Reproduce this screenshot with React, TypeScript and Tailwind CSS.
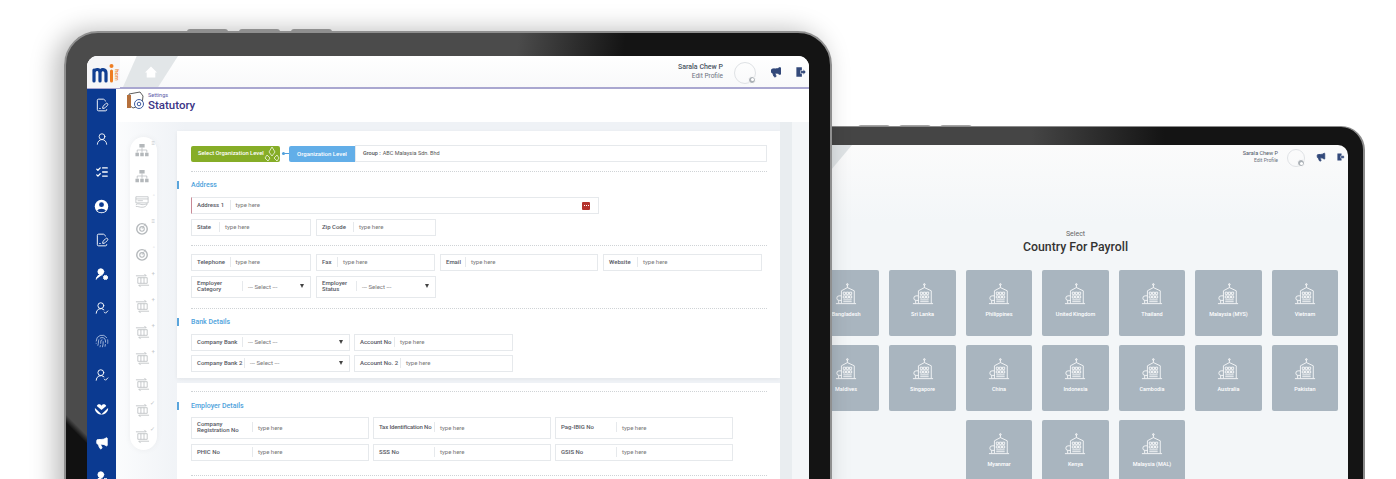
import React from 'react';
import { FilePenLine, ListChecks, Fingerprint, Megaphone, UserRound, UserRoundCheck, UserRoundCog } from 'lucide-react';

const countries = ['Bangladesh', 'Sri Lanka', 'Philippines', 'United Kingdom', 'Thailand', 'Malaysia (MYS)', 'Vietnam', 'Maldives', 'Singapore', 'China', 'Indonesia', 'Cambodia', 'Australia', 'Pakistan', 'Myanmar', 'Kenya', 'Malaysia (MAL)'];

const Building = () => (
  <svg viewBox="0 0 24 24" className="w-[22px] h-[22px]" fill="none" stroke="white" strokeWidth="0.9">
    <path d="M7 22V8.5L13.5 5 21 8.5V22M7 14H4.5a2.5 2.5 0 0 0 0 5H7M4 19v3M1 22.5h22M13.5 5V1.5" />
    <circle cx="13.5" cy="1.6" r="0.9" />
    <path d="M9 10h2.4v2.4H9zM12.4 10h2.4v2.4h-2.4zM15.8 10h2.4v2.4h-2.4zM9 14h2.4v2.4H9zM12.4 14h2.4v2.4h-2.4zM15.8 14h2.4v2.4h-2.4zM9 18.4h9.2M9 20.4h9.2" />
  </svg>
);

const Logo = () => (
  <div className="relative w-[33px] h-[32px] bg-[#f6f6f8] shrink-0 flex items-center pl-[5px]">
    <svg viewBox="0 0 22 20" className="w-[22px] h-[20px] mt-[1px]" fill="none" strokeLinecap="round">
      <path d="M2 18V7M2 9c1-3 6-4 6 1v8M8 10c0-5 6-4 6 0v8" stroke="#123f92" strokeWidth="3.2" />
      <path d="M19.5 8v10" stroke="#ee7d22" strokeWidth="3" />
      <circle cx="19.5" cy="3" r="2" fill="#ee7d22" />
    </svg>
    <span className="absolute right-[-3px] top-[16px] rotate-90 text-[6px] leading-[6px] font-medium text-[#ee7d22]">hcm</span>
  </div>
);

const Door = () => (
  <svg viewBox="0 0 16 16" className="w-[11px] h-[12px]">
    <path d="M2 1h8v14H2z" fill="#33497a" />
    <path d="M8 6h4V3.5L16 8l-4 4.5V10H8z" fill="#33497a" stroke="white" strokeWidth="0.8" />
  </svg>
);

const Avatar = ({ cls }: { cls: string }) => (
  <div className={`relative rounded-full border border-[#dfe2e5] ${cls}`}>
    <div className="absolute right-[-1px] bottom-[-1px] w-[8px] h-[8px] rounded-full bg-[#aab0b5] border border-white flex items-center justify-center">
      <div className="w-[3px] h-[3px] rounded-full bg-white" />
    </div>
  </div>
);

// blue rail glyphs that lucide has no solid version of
const UserDisc = () => (
  <svg viewBox="0 0 16 16" className="w-[15px] h-[15px] shrink-0">
    <circle cx="8" cy="8" r="7.2" fill="white" />
    <circle cx="8" cy="6" r="2.6" fill="#0b3a91" />
    <path d="M3.4 12.6c1-3 8.2-3 9.2 0-2.4 2.2-6.8 2.2-9.2 0z" fill="#0b3a91" />
  </svg>
);

const HeartHand = () => (
  <svg viewBox="0 0 16 16" className="w-[15px] h-[15px] shrink-0">
    <path d="M8 5C6.6 2.6 3.6 3 3 5.4L8 9.6l5-4.2C12.400 3 9.400 2.600 8 5z" fill="white" />
    <path d="M1 7.500l7 6.500 7-6.500c.6 3-2.500 7-7 7s-7.600-4-7-7z" fill="white" />
  </svg>
);

const railIcons = [
  <FilePenLine key="a" size={14} strokeWidth={1.6} className="text-white shrink-0" />,
  <UserRound key="b" size={14} strokeWidth={1.5} className="text-white shrink-0" />,
  <ListChecks key="c" size={14} strokeWidth={2.2} className="text-white shrink-0" />,
  <UserDisc key="d" />,
  <FilePenLine key="e" size={14} strokeWidth={1.6} className="text-white shrink-0" />,
  <UserRoundCog key="f" size={14} strokeWidth={1.5} className="text-white fill-white shrink-0" />,
  <UserRoundCheck key="g" size={14} strokeWidth={1.6} className="text-white shrink-0" />,
  <Fingerprint key="h" size={14} strokeWidth={1.3} className="text-[#c9d6ee] shrink-0" />,
  <UserRoundCheck key="i" size={14} strokeWidth={1.6} className="text-white shrink-0" />,
  <HeartHand key="j" />,
  <Megaphone key="k" size={14} strokeWidth={1.4} className="text-white fill-white shrink-0" />,
  <UserRoundCog key="l" size={14} strokeWidth={1.5} className="text-white fill-white shrink-0" />,
];

const grey = '#b4b8bb';

const Org = () => (
  <svg viewBox="0 0 16 16" className="w-[14px] h-[14px]" fill={grey}>
    <path d="M5 1h6v4H5zM0.500 11h4v4h-4zM6 11h4v4H6zM11.500 11h4v4h-4z" />
    <path d="M8 5v6M2.500 11V8h11v3" fill="none" stroke={grey} strokeWidth="0.8" />
  </svg>
);

const Card = () => (
  <svg viewBox="0 0 16 16" className="w-[16px] h-[14px]" fill="none" stroke={grey} strokeWidth="0.8">
    <path d="M1 2h14v7H1zM1 4.500h14M3 6.500h6" />
    <path d="M1 11c3-2 5 0 7 0s3 0 6-1c-1 3-3 4-6 4s-4-1-7-1" />
  </svg>
);

const Dart = () => (
  <svg viewBox="0 0 16 16" className="w-[14px] h-[14px]" fill="none" stroke={grey}>
    <circle cx="8" cy="9" r="6" strokeWidth="1.6" />
    <circle cx="8" cy="9" r="2.600" strokeWidth="1.2" />
    <path d="M8 9l4-6" strokeWidth="0.8" />
  </svg>
);

const Swap = () => (
  <svg viewBox="0 0 16 16" className="w-[15px] h-[15px]" fill="none" stroke={grey} strokeWidth="0.8">
    <path d="M3 5h10v6H3zM6.300 5v6M9.600 5v6" />
    <path d="M1 3h11l-2-2M15 13H4l2 2" />
  </svg>
);

const navIcons = [
  { icon: Org, extra: '≡' },
  { icon: Org, extra: '' },
  { icon: Card, extra: '◦' },
  { icon: Dart, extra: '≡' },
  { icon: Dart, extra: '◦' },
  { icon: Swap, extra: '+' },
  { icon: Swap, extra: '+' },
  { icon: Swap, extra: '+' },
  { icon: Swap, extra: '+' },
  { icon: Swap, extra: '' },
  { icon: Swap, extra: '✓' },
  { icon: Swap, extra: '✓' },
];

const Field = ({ label, cls, labelCls, select, accent }: { label: string; cls: string; labelCls: string; select?: boolean; accent?: boolean }) => (
  <div className={`flex items-center pb-[2px] border border-[#e6e9ec] bg-white ${accent ? 'border-l-[#c98a96]' : ''} ${cls}`}>
    <span className={`pl-[5px] text-[6px] leading-[6px] font-medium text-[#55575f] shrink-0 ${labelCls}`}>{label}</span>
    <span className="w-px h-[10px] bg-[#e6e9ec] shrink-0" />
    {select ? (
      <>
        <span className="pl-[5px] text-[6px] text-[#777] flex-1">--- Select ---</span>
        <span className="mr-[6px] w-0 h-0 border-x-[2.5px] border-x-transparent border-t-[4px] border-t-[#444]" />
      </>
    ) : (
      <span className="pl-[5px] text-[6px] text-[#777] flex-1">type here</span>
    )}
    {accent && (
      <span className="mr-[8px] mt-[2px] w-[8px] h-[8px] rounded-[1px] bg-[#b5332e] flex items-center justify-center gap-px">
        <span className="w-px h-px bg-white" />
        <span className="w-px h-px bg-white" />
        <span className="w-px h-px bg-white" />
      </span>
    )}
  </div>
);

const Dots = ({ cls }: { cls: string }) => <div className={`w-[576px] border-t border-dotted border-[#cfd3d6] ${cls}`} />;

const Heading = ({ text, cls }: { text: string; cls: string }) => (
  <div className={`-ml-[14px] pl-[12px] border-l-2 border-[#5aa5dc] h-[8px] flex items-center text-[7px] font-medium text-[#4ea2dc] ${cls}`}>{text}</div>
);

export default function App() {
  return (
    <div className="relative w-[1396px] h-[479px] overflow-hidden bg-white font-['Roboto',sans-serif]">
      {/* back tablet */}
      <div className="absolute left-[858px] top-[125px] flex gap-[9px]">
        <div className="w-[32px] h-[3px] rounded-t bg-[#a5a5a5]" />
        <div className="w-[32px] h-[3px] rounded-t bg-[#a5a5a5]" />
        <div className="w-[32px] h-[3px] rounded-t bg-[#a5a5a5]" />
      </div>
      <div className="absolute left-[700px] top-[126px] w-[665px] h-[400px] rounded-tr-[24px] border-t border-r-2 border-[#8b8b8b] bg-[linear-gradient(90deg,#454545_0%,#454545_50%,#141414_70%)] pt-[18px] pr-[15px]">
        <div className="relative h-full rounded-tr-[10px] overflow-hidden bg-[linear-gradient(180deg,#fbfbfb_0%,#f3f6f8_20%)]">
          <div className="absolute left-[131px] top-0 w-[21px] h-[25px] bg-[#dfe3e5] [clip-path:polygon(0_0,100%_0,0_100%)]" />
          <div className="h-[24px] flex items-center justify-end">
            <div className="text-right">
              <div className="text-[5.5px] leading-[7px] text-[#4b5563]">Sarala Chew P</div>
              <div className="text-[5px] leading-[7px] text-[#6b7280]">Edit Profile</div>
            </div>
            <Avatar cls="ml-[9px] w-[18px] h-[18px] mt-[2px]" />
            <Megaphone size={10} className="ml-[11px] text-[#33497a] fill-[#33497a]" />
            <div className="ml-[9px] mr-[2px] scale-75"><Door /></div>
          </div>
          <div className="ml-[113px] w-[525px] pt-[61px]">
            <div className="text-center text-[7px] leading-[9px] text-[#666]">Select</div>
            <div className="text-center text-[12.300px] leading-[16px] font-medium text-[#333] mb-[15px]">Country For Payroll</div>
            <div className="grid grid-cols-7 gap-x-[10.300px] gap-y-[9px]">
              {countries.map((c, i) => (
                <div key={c} className={`h-[66px] rounded-[2px] bg-[#a9b5bf] flex flex-col items-center pt-[13px] gap-[5px] ${i === 14 ? 'col-start-3' : ''}`}>
                  <Building />
                  <span className="text-[5.5px] font-medium text-white whitespace-nowrap">{c}</span>
                </div>
              ))}
            </div>
          </div>
        </div>
      </div>

      {/* front tablet */}
      <div className="absolute left-[187px] top-[29px] flex gap-[11px]">
        <div className="w-[41px] h-[3px] rounded-t bg-[#a5a5a5]" />
        <div className="w-[41px] h-[3px] rounded-t bg-[#a5a5a5]" />
        <div className="w-[41px] h-[3px] rounded-t bg-[#a5a5a5]" />
      </div>
      <div className="absolute left-[64px] top-[31px] w-[768px] h-[490px] rounded-[34px] border-2 border-[#8f8f8f] shadow-[-8px_0_26px_rgba(0,0,0,0.28)] bg-[linear-gradient(45deg,#111_0,#111_68px,transparent_74px),linear-gradient(97deg,#4b4b4b_55%,#141414_68%)] pt-[23px] pl-[21px] pr-[21px]">
        <div className="h-full rounded-t-[11px] overflow-hidden bg-white flex flex-col">
          {/* top bar */}
          <div className="relative h-[33px] shrink-0 flex border-b-2 border-[#a9a7d0] bg-[linear-gradient(180deg,#fff,#f8f9fa)]">
            <Logo />
            <div className="absolute left-[36px] top-0 w-[55px] h-[31px] bg-[#e2e6e8] [clip-path:polygon(25%_0,100%_0,64%_100%,0_100%)] flex items-center justify-center">
              <svg viewBox="0 0 12 12" className="w-[12px] h-[12px]"><path d="M6 0.500L12 6.500H10.300V11.500H1.700V6.500H0z" fill="white" /></svg>
            </div>
            <div className="flex-1 flex items-center justify-end">
              <div className="text-right">
                <div className="text-[7px] leading-[9px] font-medium text-[#4b5563]">Sarala Chew P</div>
                <div className="text-[6.5px] leading-[9px] text-[#6b7280]">Edit Profile</div>
              </div>
              <Avatar cls="ml-[11px] w-[22px] h-[22px] mt-[2px]" />
              <Megaphone size={12} className="ml-[14px] text-[#33497a] fill-[#33497a]" />
              <div className="ml-[13px] mr-[3px]"><Door /></div>
            </div>
          </div>

          <div className="flex flex-1 min-h-0">
            {/* blue rail */}
            <div className="w-[29px] shrink-0 bg-[#0b3a91] flex flex-col items-center pt-[9px] gap-[19.600px]">
              {railIcons}
            </div>

            <div className="flex-1 flex flex-col min-w-0">
              {/* title */}
              <div className="h-[33px] shrink-0 flex items-start pl-[10px] pt-[2px] gap-[2px]">
                <svg viewBox="0 0 20 20" className="w-[20px] h-[20px] shrink-0" fill="none">
                  <path d="M3 3l11-2 3 4-1 9-9 3-4-3z" stroke="#333" strokeWidth="0.8" />
                  <path d="M1 4h4v13H1z" fill="#b5703c" />
                  <circle cx="13" cy="13" r="4.500" fill="white" stroke="#3b5aa0" strokeWidth="1" />
                  <circle cx="13" cy="13" r="1.800" stroke="#3b5aa0" strokeWidth="1" />
                </svg>
                <div>
                  <div className="text-[5.5px] leading-[6px] pt-[1px] text-[#5b5aa8]">Settings</div>
                  <div className="text-[11.500px] leading-[13px] mt-[1px] font-medium text-[#3b3486]">Statutory</div>
                </div>
              </div>

              <div className="flex-1 flex bg-[linear-gradient(90deg,#fbfcfd_0%,#eff2f6_10%)]">
                {/* step rail */}
                <div className="w-[61px] shrink-0 pl-[14px] pt-[15px]">
                  <div className="w-[27px] h-[313px] rounded-full bg-white shadow-[0_0_6px_rgba(0,0,0,0.05)] flex flex-col items-center pt-[5px] gap-[10px]">
                    {navIcons.map(({ icon: Icon, extra }, i) => (
                      <div key={i} className="relative w-[16px] h-[16px] shrink-0 -ml-[3px] flex items-center justify-center">
                        <Icon />
                        {extra && <span className="absolute -right-[5px] -top-[2px] text-[6px] leading-[6px] text-[#c2c5c8]">{extra}</span>}
                      </div>
                    ))}
                  </div>
                </div>

                {/* form cards */}
                <div className="w-[603px] shrink-0 pt-[9px] flex flex-col gap-[5px]">
                  <div className="bg-white h-[247px] pl-[14px] pt-[14px] shadow-[0_1px_4px_rgba(0,0,0,0.06)]">
                    <div className="flex items-center h-[17px] w-[576px]">
                      <div className="relative w-[89px] h-[16px] rounded-[2px] bg-[#86ad27] text-white text-[5.800px] font-medium flex items-center pl-[7px] overflow-hidden">
                        <span>Select Organization Level</span>
                        <svg viewBox="0 0 16 16" className="absolute right-0 top-0 w-[16px] h-[16px]" fill="none" stroke="white" strokeWidth="0.7"><path d="M8 1l3 5-3 4-3-4zM3 9l3 3-2 3-3-3zM13 9l2 3-2 3-3-3z" /></svg>
                      </div>
                      <div className="w-[9px] flex items-center pl-[2px]">
                        <div className="w-[3px] h-[3px] rounded-full bg-[#4e9fdc]" />
                        <div className="w-[4px] h-px bg-[#4e9fdc]" />
                      </div>
                      <div className="w-[66px] h-[16px] rounded-l-[2px] bg-[#62aee8] text-white text-[6px] font-medium flex items-center justify-center shrink-0">Organization Level</div>
                      <div className="flex-1 h-[17px] border border-[#e6e9ec] flex items-center pl-[7px] text-[5.5px] text-[#555]"><b className="font-medium mr-[2px]">Group :</b> ABC Malaysia Sdn. Bhd</div>
                    </div>
                    <Dots cls="mt-[9px]" />
                    <Heading text="Address" cls="mt-[9px]" />
                    <div className="mt-[8px]"><Field label="Address 1" cls="w-[408px] h-[17px]" labelCls="w-[37.500px]" accent /></div>
                    <div className="mt-[5px] flex gap-[5px]">
                      <Field label="State" cls="w-[120px] h-[17px]" labelCls="w-[27px]" />
                      <Field label="Zip Code" cls="w-[120px] h-[17px]" labelCls="w-[36px]" />
                    </div>
                    <Dots cls="mt-[9px]" />
                    <div className="mt-[8px] flex gap-[5px]">
                      <Field label="Telephone" cls="w-[120px] h-[17px]" labelCls="w-[37.500px]" />
                      <Field label="Fax" cls="w-[119px] h-[17px]" labelCls="w-[20px]" />
                      <Field label="Email" cls="w-[158px] h-[17px]" labelCls="w-[24px]" />
                      <Field label="Website" cls="w-[159px] h-[17px]" labelCls="w-[33px]" />
                    </div>
                    <div className="mt-[5px] flex gap-[5px]">
                      <Field label="Employer Category" cls="w-[120px] h-[22px]" labelCls="w-[50px]" select />
                      <Field label="Employer Status" cls="w-[120px] h-[22px]" labelCls="w-[39px]" select />
                    </div>
                    <Dots cls="mt-[10px]" />
                    <Heading text="Bank Details" cls="mt-[9px]" />
                    <div className="mt-[8px] flex gap-[4px]">
                      <Field label="Company Bank" cls="w-[159px] h-[17px]" labelCls="w-[50px]" select />
                      <Field label="Account No" cls="w-[159px] h-[17px]" labelCls="w-[39px]" />
                    </div>
                    <div className="mt-[4px] flex gap-[4px]">
                      <Field label="Company Bank 2" cls="w-[159px] h-[17px]" labelCls="w-[52px]" select />
                      <Field label="Account No. 2" cls="w-[159px] h-[17px]" labelCls="w-[45px]" />
                    </div>
                  </div>

                  <div className="flex-1 bg-white pl-[14px] pt-[8px]">
                    <Dots cls="" />
                    <Heading text="Employer Details" cls="mt-[10px]" />
                    <div className="mt-[7px] flex gap-[4px]">
                      <Field label="Company Registration No" cls="w-[178px] h-[22px]" labelCls="w-[60px]" />
                      <Field label="Tax Identification No" cls="w-[178px] h-[22px]" labelCls="w-[60px] whitespace-nowrap tracking-[-0.15px]" />
                      <Field label="Pag-IBIG No" cls="w-[178px] h-[22px]" labelCls="w-[60px]" />
                    </div>
                    <div className="mt-[5px] flex gap-[4px]">
                      <Field label="PHIC No" cls="w-[178px] h-[17px]" labelCls="w-[60px]" />
                      <Field label="SSS No" cls="w-[178px] h-[17px]" labelCls="w-[60px]" />
                      <Field label="GSIS No" cls="w-[178px] h-[17px]" labelCls="w-[60px]" />
                    </div>
                    <Dots cls="mt-[14px]" />
                  </div>
                </div>

                {/* right gutter */}
                <div className="w-[12px] shrink-0 bg-[#e9edf0]" />
                <div className="flex-1 bg-[#f4f6f8]" />
              </div>
            </div>
          </div>
        </div>
      </div>
    </div>
  );
}
